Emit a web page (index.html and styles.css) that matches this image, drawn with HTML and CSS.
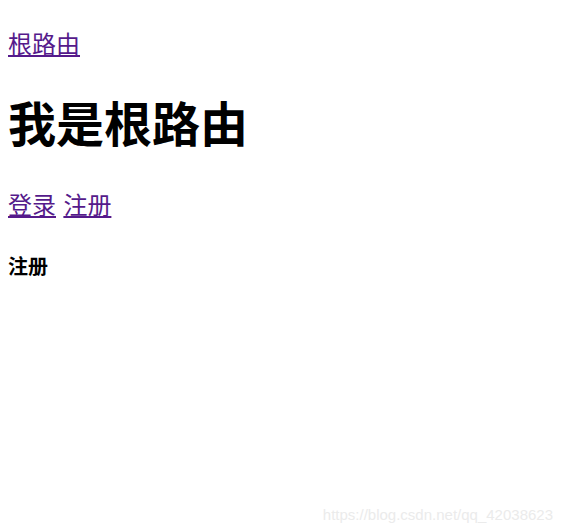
FILE: index.html
```html
<!DOCTYPE html>
<html lang="zh">
<head>
<meta charset="utf-8">
<title>根路由</title>
<link rel="stylesheet" href="styles.css">
</head>
<body>
<div class="app">
  <p class="nav nav-top"><a href="#">根路由</a></p>
  <h1 class="title">我是根路由</h1>
  <p class="nav nav-links"><a href="#">登录</a> <a href="#">注册</a></p>
  <h5 class="sub">注册</h5>
</div>
<div class="watermark">https://blog.csdn.net/qq_42038623</div>
</body>
</html>
```

FILE: styles.css
```css
html, body {
  height: 100%;
}
body {
  margin: 8px;
  font-family: "Noto Sans CJK SC", "Noto Sans", sans-serif;
  font-size: 24px;
  line-height: 1.25;
  background: #fff;
  color: #000;
}
.nav {
  margin: 24px 0;
}
.nav-top {
  margin-top: 20px;
}
.nav-links {
  word-spacing: 2px;
}
.nav a {
  color: #551a8b;
}
.title {
  font-size: 48px;
  margin: 33px 0 38px;
  font-weight: bold;
}
.sub {
  font-size: 20px;
  margin: 34px 0;
  font-weight: bold;
}
.watermark {
  position: absolute;
  right: 24px;
  bottom: 8px;
  font-family: "Liberation Sans", Arial, sans-serif;
  font-size: 15px;
  line-height: 1.2;
  color: #ebebeb;
}
```
